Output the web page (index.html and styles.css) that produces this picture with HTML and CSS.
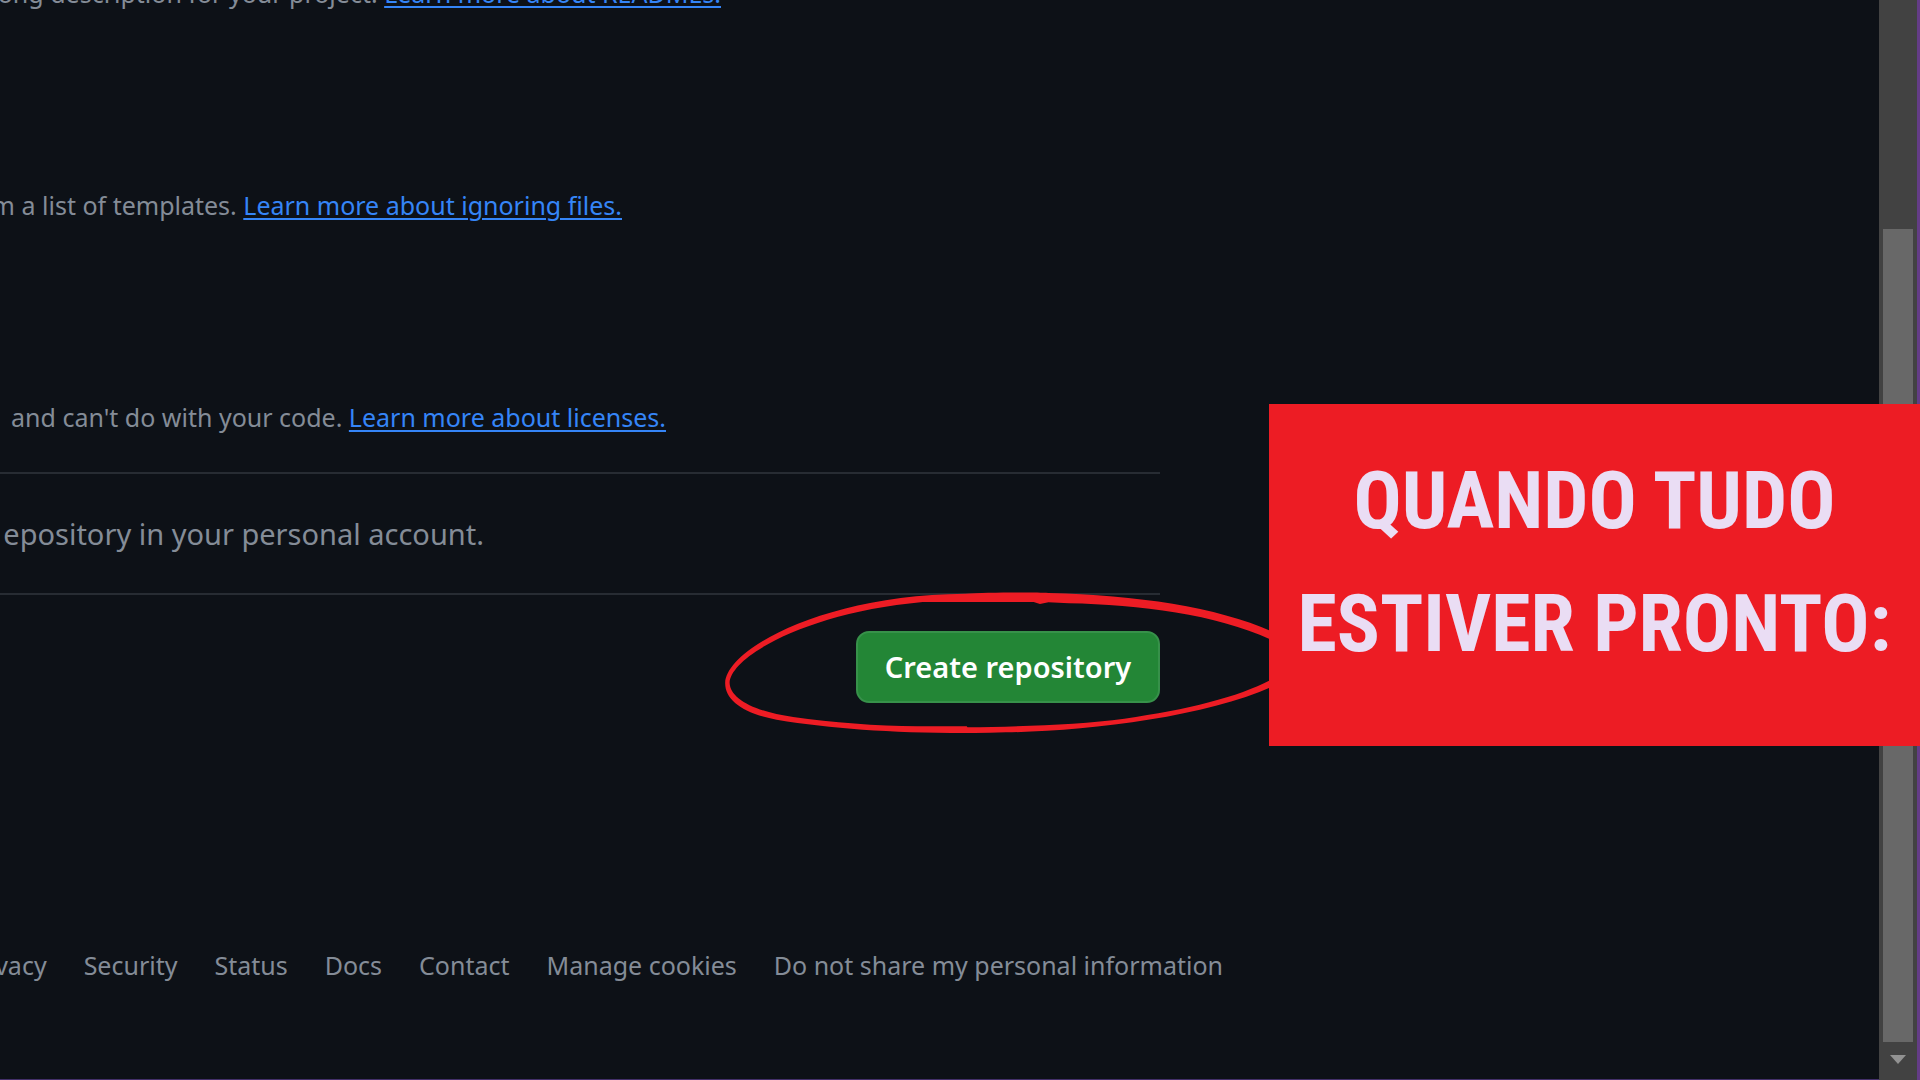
FILE: index.html
```html
<!DOCTYPE html>
<html lang="en">
<head>
<meta charset="utf-8">
<title>Create a new repository</title>
<link rel="stylesheet" href="styles.css">
</head>
<body>
<div class="window">
  <div class="page">
    <main class="form">
      <p class="note note-readme"><span>ong description for your project. <a href="#readme">Learn more about READMEs.</a></span></p>
      <p class="note note-ignore"><span>m a list of templates. <a href="#ignore">Learn more about ignoring files.</a></span></p>
      <p class="note note-license"><span>and can't do with your code. <a href="#license">Learn more about licenses.</a></span></p>
      <p class="notice"><span>epository in your personal account.</span></p>
      <div class="actions">
        <button type="button" class="create">Create repository</button>
        <svg class="ring" viewBox="0 0 1568 540" preserveAspectRatio="none" aria-hidden="true">
          <path fill="#ed1c24" fill-rule="evenodd" d="M41 338C44 240 300 75 690 71C740 68 870 66 915 69C1160 76 1380 112 1530 190L1568 250L1530 345C1350 440 1020 484 800 487Q740 490 690 489C480 488 330 476 180 449C90 430 40 390 41 338ZM53 338C54 385 120 425 225 441C330 457 450 468 560 469L694 469L696 472C830 470 1000 464 1120 446C1290 420 1430 380 1514 331L1545 270L1514 208C1370 134 1160 104 970 100L915 97L892 102L875 96L575 96C260 128 56 260 53 338Z"/>
        </svg>
      </div>
    </main>
    <footer>
      <nav class="links">
        <a href="#privacy">vacy</a>
        <a href="#security">Security</a>
        <a href="#status">Status</a>
        <a href="#docs">Docs</a>
        <a href="#contact">Contact</a>
        <a href="#cookies">Manage cookies</a>
        <a href="#personal">Do not share my personal information</a>
      </nav>
    </footer>
  </div>
  <div class="scrollbar" aria-hidden="true">
    <div class="thumb"></div>
    <svg class="arrow" viewBox="0 0 16 9"><path fill="#929292" d="M0 0H16L8 9Z"/></svg>
  </div>
  <h1 class="callout">QUANDO TUDO<br>ESTIVER PRONTO:</h1>
</div>
</body>
</html>
```
FILE: styles.css
```css
* { box-sizing: border-box; }
body {
  margin: 0;
  background: #0d1117;
  color: #848c97;
  font-family: "Noto Sans", "Open Sans", sans-serif;
  font-size: 25px;
  line-height: 36px;
}
.window {
  position: relative;
  display: flex;
  height: 100vh;
  overflow: hidden;
}
.page { flex: 1; min-width: 0; border-bottom: 1px solid #43306a; }
.form { width: 1160px; max-width: 100%; margin-top: -25px; }
.note, .notice {
  display: flex;
  justify-content: flex-end;
  margin: 0;
  white-space: nowrap;
}
.note { height: 212px; }
.note a { color: #3585f7; text-decoration-thickness: 2px; text-underline-offset: 3px; }
.note-readme { width: 721px; }
.note-ignore { width: 622px; }
.note-license { width: 666px; height: 73px; }
.notice {
  width: 100%;
  padding: 42px 676px 41px 0;
  border-top: 2px solid #272c33;
  border-bottom: 2px solid #272c33;
  font-size: 29px;
}
.actions { position: relative; display: flex; justify-content: flex-end; padding-top: 36px; }
.create {
  width: 304px;
  height: 72px;
  padding: 0;
  border: 2px solid #37914a;
  border-radius: 13px;
  background: #238636;
  color: #fff;
  font: 600 29px/36px "Noto Sans", sans-serif;
}
.ring { position: absolute; right: -130px; top: -25px; width: 580px; height: 180px; pointer-events: none; }
.links {
  display: flex;
  justify-content: flex-end;
  gap: 37px;
  width: 1223px;
  max-width: 100%;
  padding-top: 244px;
  white-space: nowrap;
}
.links a { color: #848c97; text-decoration: none; }
.scrollbar {
  display: flex;
  flex-direction: column;
  align-items: center;
  width: 41px;
  padding: 229px 4px 16px;
  border-right: 3px solid #643c87;
  background: #424242;
}
.thumb { flex: 1; width: 100%; background: #686868; }
.arrow { width: 16px; height: 9px; margin-top: 13px; }
.callout {
  position: absolute;
  top: 404px;
  right: 0;
  width: 651px;
  height: 342px;
  margin: 0;
  padding: 36px 0;
  background: #ed1c24;
  color: #eaddf4;
  font: 700 80px/123px "Roboto Condensed", Roboto, sans-serif;
  text-align: center;
  white-space: nowrap;
}
```
